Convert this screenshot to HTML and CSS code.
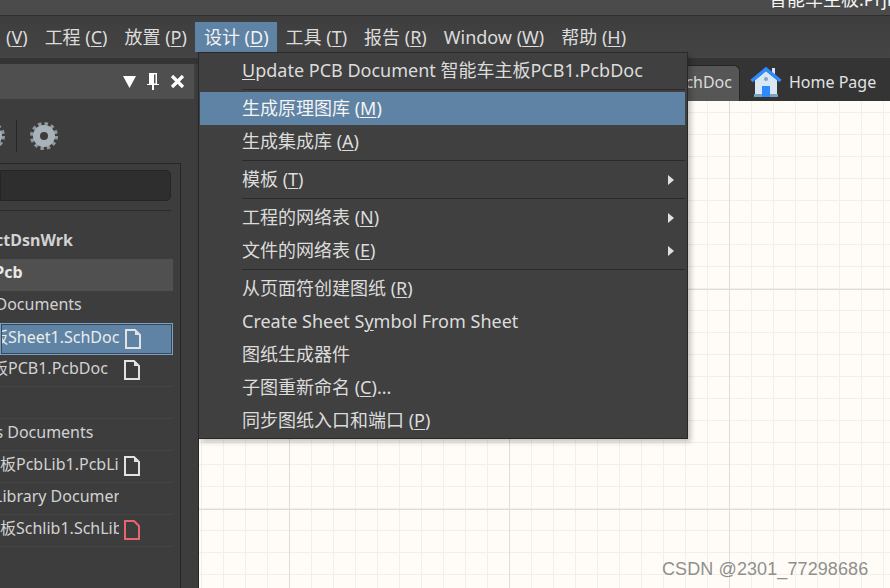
FILE: index.html
```html
<!DOCTYPE html>
<html lang="zh">
<head>
<meta charset="utf-8">
<title>设计菜单</title>
<link rel="stylesheet" href="styles.css">
</head>
<body>
<div class="app">
  <header class="titlebar"><span class="title-text">智能车主板.PrjPcb</span></header>
  <nav class="menubar">
    <span class="menu-item first">(<u>V</u>)</span>
    <span class="menu-item">工程 (<u>C</u>)</span>
    <span class="menu-item">放置 (<u>P</u>)</span>
    <span class="menu-item active">设计 (<u>D</u>)</span>
    <span class="menu-item">工具 (<u>T</u>)</span>
    <span class="menu-item">报告 (<u>R</u>)</span>
    <span class="menu-item">Window (<u>W</u>)</span>
    <span class="menu-item">帮助 (<u>H</u>)</span>
  </nav>
  <main class="main">
    <aside class="sidebar">
      <div class="side-strip"></div>
      <div class="panel-head">
        <svg class="ic-tri" viewBox="0 0 13 12"><path d="M0 0H13L6.500 12Z"/></svg>
        <svg class="ic-pin" viewBox="0 0 12 17"><path d="M2 0H10V11H12V12H7V17H5V12H0V11H2ZM7 1.500V10.500H8.500V1.500Z" fill-rule="evenodd"/></svg>
        <svg class="ic-x" viewBox="0 0 15 15"><path d="M2 2L13 13M13 2L2 13"/></svg>
      </div>
      <div class="toolbar">
        <svg class="gear gear-cut" viewBox="0 0 28 28"><circle class="gear-teeth" cx="14" cy="14" r="12"/><circle class="gear-ring" cx="14" cy="14" r="7.500"/></svg>
        <span class="tool-sep"></span>
        <svg class="gear" viewBox="0 0 28 28"><circle class="gear-teeth" cx="14" cy="14" r="12"/><circle class="gear-ring" cx="14" cy="14" r="7.500"/></svg>
      </div>
      <div class="tree-box">
        <div class="search"></div>
        <div class="search-rule"></div>
        <div class="tree-row bold"><span class="name"><span class="off-dsn">ProjectDsnWrk</span></span></div>
        <div class="tree-row bold shade"><span class="name"><span class="off-pcb">智能车主板.PrjPcb</span></span></div>
        <div class="tree-row"><span class="name"><span class="off-src">Source Documents</span></span></div>
        <div class="tree-row selected"><span class="name"><span class="off-sheet">智能车主板Sheet1.SchDoc</span></span><svg class="doc" viewBox="0 0 16 20"><path d="M1 1H10L15 6V19H1Z"/><path class="fold" d="M10 1L15 6H10Z"/></svg></div>
        <div class="tree-row ruled"><span class="name"><span class="off-pcb1">智能车主板PCB1.PcbDoc</span></span><svg class="doc" viewBox="0 0 16 20"><path d="M1 1H10L15 6V19H1Z"/><path class="fold" d="M10 1L15 6H10Z"/></svg></div>
        <div class="tree-row ruled"></div>
        <div class="tree-row ruled"><span class="name"><span class="off-lib">Libraries Documents</span></span></div>
        <div class="tree-row ruled"><span class="name"><span class="off-pcblib">主板PcbLib1.PcbLib</span></span><svg class="doc" viewBox="0 0 16 20"><path d="M1 1H10L15 6V19H1Z"/><path class="fold" d="M10 1L15 6H10Z"/></svg></div>
        <div class="tree-row ruled"><span class="name"><span class="off-schdocs">Schematic Library Documents</span></span></div>
        <div class="tree-row ruled"><span class="name"><span class="off-pcblib">主板Schlib1.SchLib</span></span><svg class="doc red" viewBox="0 0 16 20"><path d="M1 1H10L15 6V19H1Z"/></svg></div>
      </div>
    </aside>
    <section class="work">
      <div class="tabs">
        <div class="tab">智能车主板Sheet1.SchDoc</div>
        <svg class="house" viewBox="0 0 32 32">
          <rect class="h-light" x="22" y="2" width="3" height="8"/>
          <path class="h-light" d="M5 14L16 5L27 14V31H5Z"/>
          <rect class="h-base" x="4" y="28" width="24" height="3"/>
          <path class="h-roof" d="M1.500 15L16 3L30.500 15"/>
          <circle class="h-dot" cx="16" cy="13" r="2"/>
          <rect class="h-door" x="12" y="20" width="8" height="11"/>
        </svg>
        <span class="home-label">Home Page</span>
      </div>
      <div class="canvas"></div>
    </section>
  </main>

  <div class="dropdown">
    <div class="dd-row"><span><u>U</u>pdate PCB Document 智能车主板PCB1.PcbDoc</span></div>
    <div class="dd-sep"></div>
    <div class="dd-row hot"><span>生成原理图库 (<u>M</u>)</span></div>
    <div class="dd-row"><span>生成集成库 (<u>A</u>)</span></div>
    <div class="dd-sep"></div>
    <div class="dd-row"><span>模板 (<u>T</u>)</span><i class="arrow"></i></div>
    <div class="dd-sep"></div>
    <div class="dd-row"><span>工程的网络表 (<u>N</u>)</span><i class="arrow"></i></div>
    <div class="dd-row"><span>文件的网络表 (<u>E</u>)</span><i class="arrow"></i></div>
    <div class="dd-sep"></div>
    <div class="dd-row"><span>从页面符创建图纸 (<u>R</u>)</span></div>
    <div class="dd-row"><span>Create Sheet S<u>y</u>mbol From Sheet</span></div>
    <div class="dd-row"><span>图纸生成器件</span></div>
    <div class="dd-row"><span>子图重新命名 (<u>C</u>)...</span></div>
    <div class="dd-row"><span>同步图纸入口和端口 (<u>P</u>)</span></div>
  </div>
  <div class="watermark">CSDN @2301_77298686</div>
</div>
</body>
</html>
```
FILE: styles.css
```css
* { box-sizing: border-box; }
html, body { margin: 0; padding: 0; }
body {
  width: 890px;
  height: 588px;
  overflow: hidden;
  background: #3c3c3c;
  font-family: "Noto Sans", "Noto Sans CJK SC", sans-serif;
  color: #dcdcdc;
}
u { text-underline-offset: 2px; text-decoration-thickness: 1px; }
.app {
  position: relative;
  width: 890px;
  height: 588px;
  display: flex;
  flex-direction: column;
  overflow: hidden;
}
.titlebar {
  height: 16px;
  flex: none;
  background: #4b4b4b;
  border-bottom: 1px solid #2f2f2f;
  overflow: hidden;
  padding-left: 769px;
  white-space: nowrap;
}
.title-text {
  display: block;
  margin-top: -14px;
  line-height: 26px;
  font-size: 18px;
  color: #f4f4f4;
}
.menubar {
  height: 42px;
  flex: none;
  padding-top: 6px;
  display: flex;
  align-items: flex-start;
  background: linear-gradient(#3e3e3e, #444);
  font-size: 18px;
}
.menu-item {
  height: 30px;
  line-height: 30px;
  padding: 0 8.500px;
  white-space: nowrap;
  color: #dcdcdc;
}
.menu-item.first { padding: 0 8.500px 0 6px; }
.menu-item.active { background: #5f83a5; color: #f2f2f2; }
.main { flex: 1; display: flex; min-height: 0; }
.sidebar {
  width: 199px;
  flex: none;
  background: #3d3d3d;
  border-right: 1px solid #262626;
  display: flex;
  flex-direction: column;
  position: relative;
}
.side-strip { height: 6px; flex: none; background: #343434; margin-right: -1px; }
.panel-head {
  height: 35px;
  flex: none;
  width: 194px;
  background: #4f4f4f;
  display: flex;
  align-items: center;
  justify-content: flex-end;
  gap: 11px;
  padding-right: 9px;
}
.ic-tri { width: 13px; height: 12px; fill: #fff; }
.ic-pin { width: 12px; height: 17px; fill: #fff; }
.ic-x { width: 15px; height: 15px; fill: none; stroke: #fff; stroke-width: 3.200px; }
.toolbar {
  height: 64px;
  flex: none;
  display: flex;
  align-items: center;
  gap: 11px;
  padding-top: 9px;
}
.gear { width: 28px; height: 28px; flex: none; }
.gear-cut { margin-left: -23px; }
.gear-teeth { fill: none; stroke: #8e989e; stroke-width: 4; stroke-dasharray: 3.300 3; }
.gear-ring { fill: none; stroke: #a7b2b9; stroke-width: 7; }
.tool-sep { width: 1px; height: 32px; background: #262626; flex: none; margin-right: 2px; }
.tree-box {
  flex: 1;
  width: 181px;
  border-top: 1px solid #262626;
  border-right: 1px solid #262626;
  padding-top: 6px;
  font-size: 16px;
}
.search {
  width: 171px;
  height: 31px;
  background: #2e2e2e;
  border: 1px solid #252525;
  border-radius: 0 5px 5px 0;
}
.search-rule { width: 171px; height: 1px; margin: 9px 0 16px; background: #2a2a2a; }
.tree-row {
  width: 173px;
  height: 32px;
  display: flex;
  align-items: flex-start;
  padding-top: 2px;
  line-height: 22px;
  color: #d2d2d2;
}
.tree-row.bold { font-weight: 700; }
.tree-row.shade { background: #505050; color: #e8e8e8; }
.tree-row.selected { background: #5f83a5; border: 1px solid #7ea0bf; outline: 1px solid #34495c; outline-offset: -2px; color: #ececec; }
.tree-row.ruled { border-bottom: 1px solid #444; }
.name { width: 119px; flex: none; overflow: hidden; white-space: nowrap; }
.name > span { display: block; }
.off-dsn { margin-left: -46px; }
.off-pcb { margin-left: -112px; }
.off-src { margin-left: -60px; }
.off-sheet { margin-left: -73px; }
.off-pcb1 { margin-left: -72px; }
.off-lib { margin-left: -62px; }
.off-pcblib { margin-left: -16px; }
.off-schdocs { margin-left: -87px; }
.doc { width: 16px; height: 20px; flex: none; margin: 3px 0 0 5px; fill: none; stroke: #e2e2e2; stroke-width: 2; }
.selected .doc { margin-left: 5px; }
.doc .fold { fill: #e2e2e2; stroke: none; }
.doc.red { stroke: #e8656e; }
.work { flex: 1; min-width: 0; display: flex; flex-direction: column; }
.tabs {
  height: 43px;
  flex: none;
  background: #343434;
  display: flex;
  align-items: flex-start;
  white-space: nowrap;
  overflow: hidden;
}
.tab {
  width: 541px;
  flex: none;
  height: 36px;
  margin-top: 7px;
  background: #565656;
  border: 1px solid #262626;
  border-bottom: 0;
  border-radius: 6px 6px 0 0;
  font-size: 16px;
  line-height: 33px;
  text-align: right;
  padding-right: 7px;
  color: #dcdcdc;
}
.house { width: 32px; height: 32px; flex: none; margin: 8px 0 0 10px; }
.h-light { fill: #d9e7f5; }
.h-base { fill: #7aa2b8; }
.h-roof { fill: none; stroke: #2e8bff; stroke-width: 3.500px; stroke-linejoin: miter; }
.h-dot { fill: #86a5b8; }
.h-door { fill: #2e8bff; }
.home-label { font-size: 16px; line-height: 22px; margin: 13px 0 0 7px; color: #e2e2e2; }
.canvas {
  flex: 1;
  background-color: #fffcf7;
  background-image:
    linear-gradient(#dedcd7, #dedcd7),
    linear-gradient(#dedcd7, #dedcd7),
    linear-gradient(#f1efea, #f1efea),
    linear-gradient(#f1efea, #f1efea);
  background-size: 1px 220px, 220px 1px, 1px 22px, 22px 1px;
  background-repeat: repeat-x, repeat-y, repeat, repeat;
  background-size: 220px 100%, 100% 220px, 22px 100%, 100% 22px;
  background-image:
    linear-gradient(90deg, #dedcd7 1px, transparent 1px),
    linear-gradient(#dedcd7 1px, transparent 1px),
    linear-gradient(90deg, #f1efea 1px, transparent 1px),
    linear-gradient(#f1efea 1px, transparent 1px);
  background-position: 90px 0, 0 188px, 2px 0, 0 11px;
}
.dropdown {
  position: absolute;
  left: 198px;
  top: 52px;
  width: 490px;
  height: 387px;
  background: #404040;
  border: 1px solid #282828;
  border-top-color: #2a2a2a;
  padding: 1px 2px 0 1px;
  box-shadow: 3px 3px 5px rgba(0,0,0,.22);
  font-size: 18px;
  color: #dcdcdc;
}
.dd-row {
  height: 33px;
  line-height: 33px;
  padding-left: 42px;
  display: flex;
  align-items: center;
  justify-content: space-between;
  white-space: nowrap;
}
.dd-row.hot { background: #5f83a5; color: #f4f4f4; }
.dd-sep { height: 5px; margin-left: 42px; padding-top: 2px; }
.dd-sep::before { content: ""; display: block; height: 1px; background: #2a2a2a; }
.arrow {
  width: 0;
  height: 0;
  margin-right: 11px;
  border-left: 6px solid #e0e0e0;
  border-top: 5.500px solid transparent;
  border-bottom: 5.500px solid transparent;
}
.watermark {
  position: absolute;
  left: 662px;
  top: 558px;
  font-family: "Liberation Sans", sans-serif;
  font-size: 18px;
  line-height: 22px;
  letter-spacing: .1px;
  color: #8f8f8c;
  white-space: nowrap;
}
```
